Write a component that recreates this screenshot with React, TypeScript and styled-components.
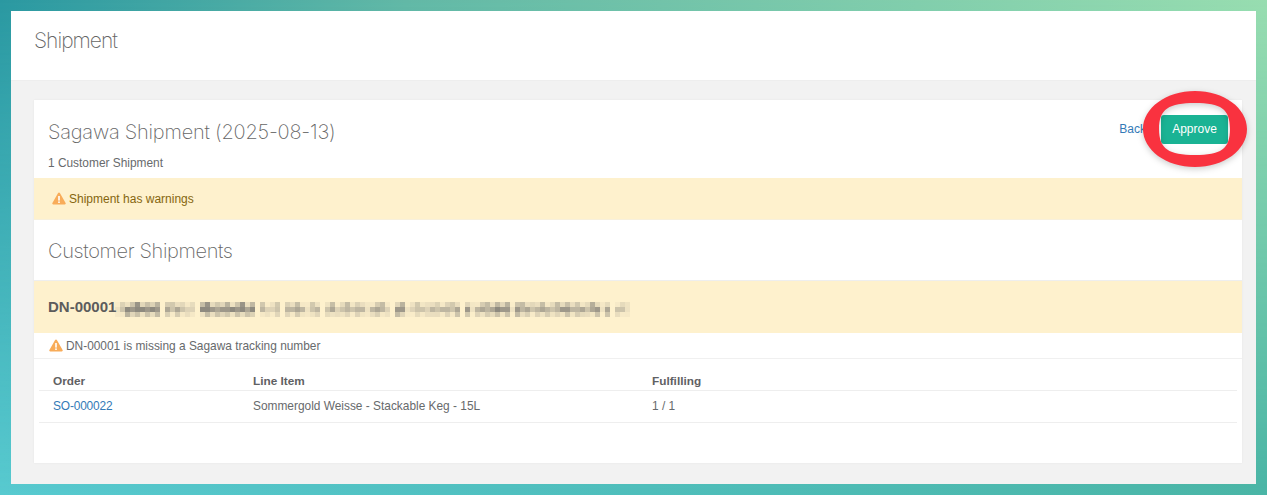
import React from "react";
import styled, { createGlobalStyle } from "styled-components";

const Global = createGlobalStyle`
  html, body { margin: 0; padding: 0; height: 495px; overflow: hidden; }
  body { font-family: "Liberation Sans", Arial, sans-serif; color: #676a6c; }
  * { box-sizing: border-box; }
`;

const Stage = styled.div`
  position: relative;
  width: 1267px;
  height: 495px;
  padding: 11px;
  background: linear-gradient(90deg, #58cad0 0%, #50c0c0 40%, #4ab5a6 100%);
  &::before {
    content: "";
    position: absolute;
    inset: 0;
    background: linear-gradient(90deg, #2a98a1 0%, #62b8a6 32%, #98ddb0 100%);
    mask-image: linear-gradient(180deg, #000 0%, transparent 100%);
  }
`;

const Window = styled.div`
  position: relative;
  width: 1245px;
  height: 473px;
  background: #f2f2f2;
  display: flex;
  flex-direction: column;
`;

const PageHeader = styled.header`
  height: 70px;
  background: #fff;
  padding: 16px 23px 0;
  font: 200 21px/28px Inter, sans-serif;
  letter-spacing: -0.98px;
  color: #666;
  border-bottom: 1px solid #eee;
`;

const Content = styled.main`
  flex: 1;
  padding: 19px 14px 21px 23px;
`;

const Card = styled.section`
  height: 363px;
  background: #fff;
  box-shadow: 0 0 2px rgba(0, 0, 0, 0.06);
`;

const Top = styled.div`
  height: 78px;
  padding: 18px 14px 0;
  display: flex;
  justify-content: space-between;
`;

const Heading = styled.h1`
  margin: 0;
  font: 200 20px/28px Inter, sans-serif;
  letter-spacing: -0.22px;
  color: #666;
`;

const Sub = styled.div`
  margin-top: 10px;
  font-size: 11.9px;
  line-height: 14px;
  color: #676a6c;
`;

const Actions = styled.div`
  display: flex;
  align-items: center;
  gap: 15px;
  height: 30px;
  margin-top: -4px;
`;

const BackLink = styled.a`
  font-size: 12px;
  color: #337ab7;
`;

const ApproveButton = styled.button`
  width: 67px;
  height: 29px;
  border: 0;
  border-radius: 3px;
  background: #1ab394;
  color: #fff;
  font: 12px "Liberation Sans", Arial, sans-serif;
`;

const Alert = styled.div`
  height: 42px;
  background: #fef1cd;
  border-bottom: 1px solid #f7f0dc;
  padding: 0 18px;
  display: flex;
  align-items: center;
  gap: 3px;
  font-size: 12px;
  color: #85660f;
`;

const SectionTitle = styled.h2`
  margin: 0;
  height: 61px;
  padding: 17px 14px 0;
  font: 200 20px/28px Inter, sans-serif;
  letter-spacing: -0.36px;
  color: #666;
  border-bottom: 1px solid #eee;
`;

const ShipmentBar = styled.div`
  height: 52px;
  background: #fef1cd;
  padding: 0 14px 1px;
  display: flex;
  align-items: center;
  font-size: 15px;
  font-weight: 700;
  color: #5c5c5c;
`;

const Warning = styled.div`
  height: 26px;
  padding: 0 15px;
  display: flex;
  align-items: center;
  gap: 3px;
  font-size: 11.9px;
  color: #676a6c;
  border-bottom: 1px solid #f0f0f0;
`;

const Table = styled.div`
  margin: 9px 5px 0;
`;

const TableRow = styled.div<{ $head?: boolean }>`
  height: ${(p) => (p.$head ? "23px" : "32px")};
  display: grid;
  grid-template-columns: 200px 399px 1fr;
  align-items: center;
  padding: ${(p) => (p.$head ? "4px 14px 0" : "0 14px 1px")};
  font-size: ${(p) => (p.$head ? "11.8px" : "11.9px")};
  font-weight: ${(p) => (p.$head ? 700 : 400)};
  color: ${(p) => (p.$head ? "#5f6163" : "#676a6c")};
  border-bottom: 1px solid #eeeeee;
`;

const OrderLink = styled.a`
  letter-spacing: -0.15px;
  color: #337ab7;
`;

const Oval = styled.svg`
  position: absolute;
  left: 1135px;
  top: 83px;
  filter: drop-shadow(0 2px 3px rgba(0, 0, 0, 0.2));
`;

const RedactionArt = styled.svg`
  margin: 6px 0 0 -1px;
  flex: none;
`;

const WarningIcon = () => (
  <svg width="14" height="13" viewBox="0 0 14 13">
    <path d="M7 .6c.4 0 .7.2.9.5l5.7 10c.4.7-.1 1.5-.9 1.5H1.3c-.8 0-1.3-.8-.9-1.5l5.7-10c.2-.3.5-.5.9-.5z" fill="#f8ac59" />
    <rect x="6.2" y="4" width="1.6" height="4.6" fill="#fff" />
    <rect x="6.2" y="9.4" width="1.6" height="1.6" fill="#fff" />
  </svg>
);

const redactionMiddle =
  "137677676" + "0" + "535322" + "0" + "77656676757" + "0" + "4223" + "04454" + "134" + "0" + "35234" + "344" + "1454" +
  "2" + "0" + "66" + "1" + "2332434435" + "0" + "6" + "1" + "4545766" + "1" + "645345" + "43466" + "44535" + "615" + "0" + "33" + "1";

const topFactor = [0.3, 0.7, 0.15, 0.5, 0.9, 0.25, 0.55];
const bottomFactor = [0.5, 0.2, 0.6, 0.3, 0.45, 0.15];

const Redaction = () => {
  const rects: React.ReactElement[] = [];
  redactionMiddle.split("").forEach((ch, i) => {
    const v = Number(ch) / 10;
    if (v === 0) return;
    const rows = [v * topFactor[i % topFactor.length], v, v * bottomFactor[i % bottomFactor.length]];
    rows.forEach((o, r) => {
      rects.push(<rect key={`${i}-${r}`} x={i * 5} y={r * 5} width="5" height="5" fill="#5e5e5e" opacity={o} />);
    });
  });
  return (
    <RedactionArt width={redactionMiddle.length * 5} height="15" viewBox={`0 0 ${redactionMiddle.length * 5} 15`}>
      {rects}
    </RedactionArt>
  );
};

export default function App() {
  return (
    <>
      <Global />
      <Stage>
        <Window>
          <PageHeader>Shipment</PageHeader>
          <Content>
            <Card>
              <Top>
                <div>
                  <Heading>Sagawa Shipment (2025-08-13)</Heading>
                  <Sub>1 Customer Shipment</Sub>
                </div>
                <Actions>
                  <BackLink>Back</BackLink>
                  <ApproveButton>Approve</ApproveButton>
                </Actions>
              </Top>
              <Alert>
                <WarningIcon />
                Shipment has warnings
              </Alert>
              <SectionTitle>Customer Shipments</SectionTitle>
              <ShipmentBar>
                DN-00001
                <Redaction />
              </ShipmentBar>
              <Warning>
                <WarningIcon />
                DN-00001 is missing a Sagawa tracking number
              </Warning>
              <Table>
                <TableRow $head>
                  <span>Order</span>
                  <span>Line Item</span>
                  <span>Fulfilling</span>
                </TableRow>
                <TableRow>
                  <OrderLink>SO-000022</OrderLink>
                  <span>Sommergold Weisse - Stackable Keg - 15L</span>
                  <span>1 / 1</span>
                </TableRow>
              </Table>
            </Card>
          </Content>
        </Window>
        <Oval width="124" height="92" viewBox="0 0 124 92">
          <path
            fillRule="evenodd"
            fill="#f9323f"
            d="M8 46C8 25 31 8 60 8s52 17 52 38-23 38-52 38S8 67 8 46z M24 46C24 26 34 20 60 20S95 26 95 46 86 72 60 72 24 66 24 46z"
          />
        </Oval>
      </Stage>
    </>
  );
}
